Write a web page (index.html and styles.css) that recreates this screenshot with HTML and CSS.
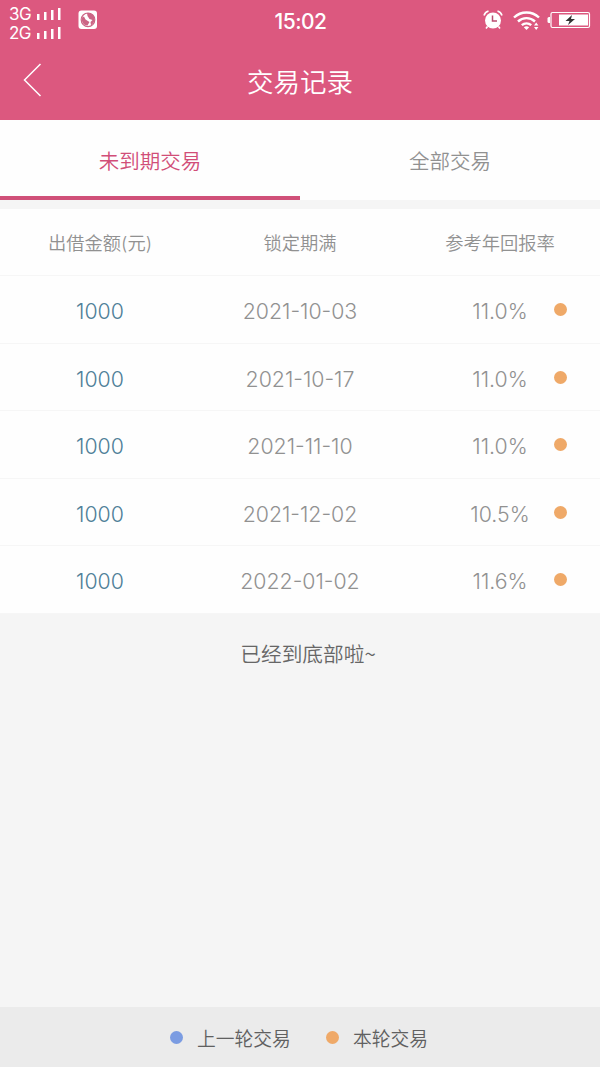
FILE: index.html
```html
<!DOCTYPE html>
<html lang="zh-CN">
<head>
  <meta charset="UTF-8" />
  <meta name="viewport" content="width=device-width, initial-scale=1.0"/>
  <title>交易记录</title>
  <link rel="stylesheet" href="styles.css">
</head>
<body>
  <header>
    <div class="status-bar">
      <div class="networks">
        <div class="network">
          <span>3G</span>
          <svg width="24" height="12" viewBox="0 0 24 12" fill="#fff"><path d="M0 6h2.500v6H0zM7 4h2.500v8H7zM14 2h2.500v10H14zM21 0h2.500v12H21z"/></svg>
        </div>
        <div class="network">
          <span>2G</span>
          <svg width="24" height="12" viewBox="0 0 24 12" fill="#fff"><path d="M0 6h2.500v6H0zM7 4h2.500v8H7zM14 2h2.500v10H14zM21 0h2.500v12H21z"/></svg>
        </div>
      </div>
      <svg class="app-icon" width="20" height="20" viewBox="0 0 20 20">
        <rect x=".5" y=".5" width="18.500" height="18.500" rx="3" fill="#fff"/>
        <circle cx="10" cy="9.800" r="6.800" fill="none" stroke="#cc6485" stroke-width="1.200"/>
        <path d="M9 3c4-.5 7.500 2 7.500 6 0 3-1.500 5-3.500 6.500L12.500 12l2-2-3-1-2-3zM4 7.500l2-1 1.500 3 4 2.500-2 3.500C6 15.500 3 12 4 7.500z" fill="#cc6485"/>
      </svg>
      <div class="time">15:02</div>
      <div class="status-icons">
        <svg width="20" height="20" viewBox="0 0 20 20">
          <circle cx="10" cy="10.500" r="8" fill="#fff"/>
          <path d="M1 5.500Q2 2 5.500 1M14.500 1Q18 2 19 5.500M4.500 16.500L3 18.500M15.500 16.500L17 18.500" fill="none" stroke="#fff" stroke-width="1.600"/>
          <path d="M9.500 5.500v5.500h4.500" fill="none" stroke="#b94c70" stroke-width="1.500"/>
        </svg>
        <svg class="wifi" width="28" height="21" viewBox="0 0 28 21">
          <path d="M1 7.500A18 18 0 0 1 26 7.500M5 11.500A12.500 12.500 0 0 1 22 11.500M8.800 15.200A7 7 0 0 1 18.200 15.200" fill="none" stroke="#fff" stroke-width="2.400"/>
          <path d="M10.800 17.300Q13.500 15 16.200 17.300L13.500 20zM21 15.500l2.200-3 2.200 3zM21 17l2.200 3 2.200-3z" fill="#fff"/>
        </svg>
        <svg class="battery" width="44" height="18" viewBox="0 0 44 18">
          <path d="M3 6H2Q.5 6 .5 7.500v3Q.5 12 2 12h1z" fill="#fff"/>
          <rect x="4" y="1.500" width="38.500" height="15" rx="1.500" fill="none" stroke="#fff" stroke-width="1.200"/>
          <path d="M12 3.500h29v11H12z" fill="#fff"/>
          <path d="M25 4l-6.500 6h4L21 14l7-6h-4z" fill="#333"/>
        </svg>
      </div>
    </div>
    <div class="title-bar">
      <svg class="back" width="20" height="34" viewBox="0 0 20 34"><path d="M17.500 1L1.500 17L17.500 33" fill="none" stroke="#fff" stroke-width="1.500"/></svg>
      <h1>交易记录</h1>
    </div>
  </header>

  <nav class="tabs">
    <div class="tab active">未到期交易</div>
    <div class="tab">全部交易</div>
  </nav>

  <div class="list">
    <div class="row head">
      <div>出借金额(元)</div>
      <div>锁定期满</div>
      <div>参考年回报率</div>
    </div>
    <div class="row">
      <div class="amount">1000</div>
      <div>2021-10-03</div>
      <div class="rate">11.0%<span class="dot"></span></div>
    </div>
    <div class="row">
      <div class="amount">1000</div>
      <div>2021-10-17</div>
      <div class="rate">11.0%<span class="dot"></span></div>
    </div>
    <div class="row">
      <div class="amount">1000</div>
      <div>2021-11-10</div>
      <div class="rate">11.0%<span class="dot"></span></div>
    </div>
    <div class="row">
      <div class="amount">1000</div>
      <div>2021-12-02</div>
      <div class="rate">10.5%<span class="dot"></span></div>
    </div>
    <div class="row">
      <div class="amount">1000</div>
      <div>2022-01-02</div>
      <div class="rate">11.6%<span class="dot"></span></div>
    </div>
  </div>

  <div class="list-end">已经到底部啦~</div>

  <footer>
    <div class="legend"><span class="dot blue"></span>上一轮交易</div>
    <div class="legend"><span class="dot"></span>本轮交易</div>
  </footer>
</body>
</html>
```

FILE: styles.css
```css
* {
  box-sizing: border-box;
}

body {
  font-family: Inter, "Noto Sans CJK SC", sans-serif;
  font-weight: 350;
  background: #f5f5f5;
  color: #919191;
  margin: 0;
  height: 1067px;
  display: flex;
  flex-direction: column;
}

header {
  background: #dc587f;
  color: white;
  height: 120px;
}

.status-bar {
  height: 40px;
  padding: 0 9px;
  display: grid;
  grid-template-columns: 69px 1fr auto 1fr;
  align-items: center;
}

.networks {
  padding-top: 4px;
}

.network {
  display: flex;
  align-items: center;
  gap: 5px;
  height: 19px;
  font-size: 17px;
  font-weight: 400;
  letter-spacing: -0.5px;
}

.network span {
  width: 23px;
}

.app-icon {
  margin-bottom: 2px;
}

.time {
  font-size: 21px;
  font-weight: 450;
  letter-spacing: -0.5px;
  margin-left: -69px;
  position: relative;
  left: 9px;
}

.status-icons {
  display: flex;
  align-items: center;
  justify-content: flex-end;
  padding-bottom: 2px;
}

.wifi {
  margin-left: 10px;
}

.battery {
  margin-left: 6px;
}

.title-bar {
  height: 80px;
  padding: 0 23px;
  display: grid;
  grid-template-columns: 20px 1fr 20px;
  align-items: center;
}

h1 {
  margin: 0;
  font-size: 26.5px;
  font-weight: 350;
  text-align: center;
}

.tabs {
  display: flex;
  height: 80px;
  background: #fefefe;
}

.tab {
  flex: 1;
  font-size: 20.5px;
  line-height: 84px;
  text-align: center;
}

.tab.active {
  color: #d14e78;
  border-bottom: 4px solid #d05079;
}

.list {
  margin-top: 8.5px;
  background: #fefefe;
}

.row {
  display: grid;
  grid-template-columns: repeat(3, 1fr);
  align-items: center;
  height: 67.5px;
  padding-top: 4px;
  border-bottom: 1px solid #f6f6f6;
  font-size: 21.3px;
  font-weight: 300;
  text-align: center;
}

.row.head {
  padding-top: 0;
  font-size: 18.3px;
  font-weight: 350;
}

.amount {
  color: #4f7f98;
}

.rate {
  position: relative;
}

.dot {
  display: inline-block;
  width: 13px;
  height: 13px;
  border-radius: 50%;
  background: #efa968;
}

/* round marker to the right of the rate */
.rate .dot {
  position: absolute;
  right: 33.5px;
  top: 5px;
}

.dot.blue {
  background: #7b9ce2;
}

.list-end {
  padding-top: 24px;
  font-family: "Noto Sans CJK SC", sans-serif;
  font-size: 20.7px;
  line-height: 30px;
  color: #666;
  text-align: center;
  padding-left: 16px;
}

footer {
  margin-top: auto;
  height: 60px;
  background: #ebebeb;
  color: #606060;
  display: flex;
  align-items: center;
  justify-content: center;
  gap: 35px;
  font-size: 18.8px;
  padding-right: 2px;
}

.legend {
  display: flex;
  align-items: center;
  gap: 14px;
}
```
